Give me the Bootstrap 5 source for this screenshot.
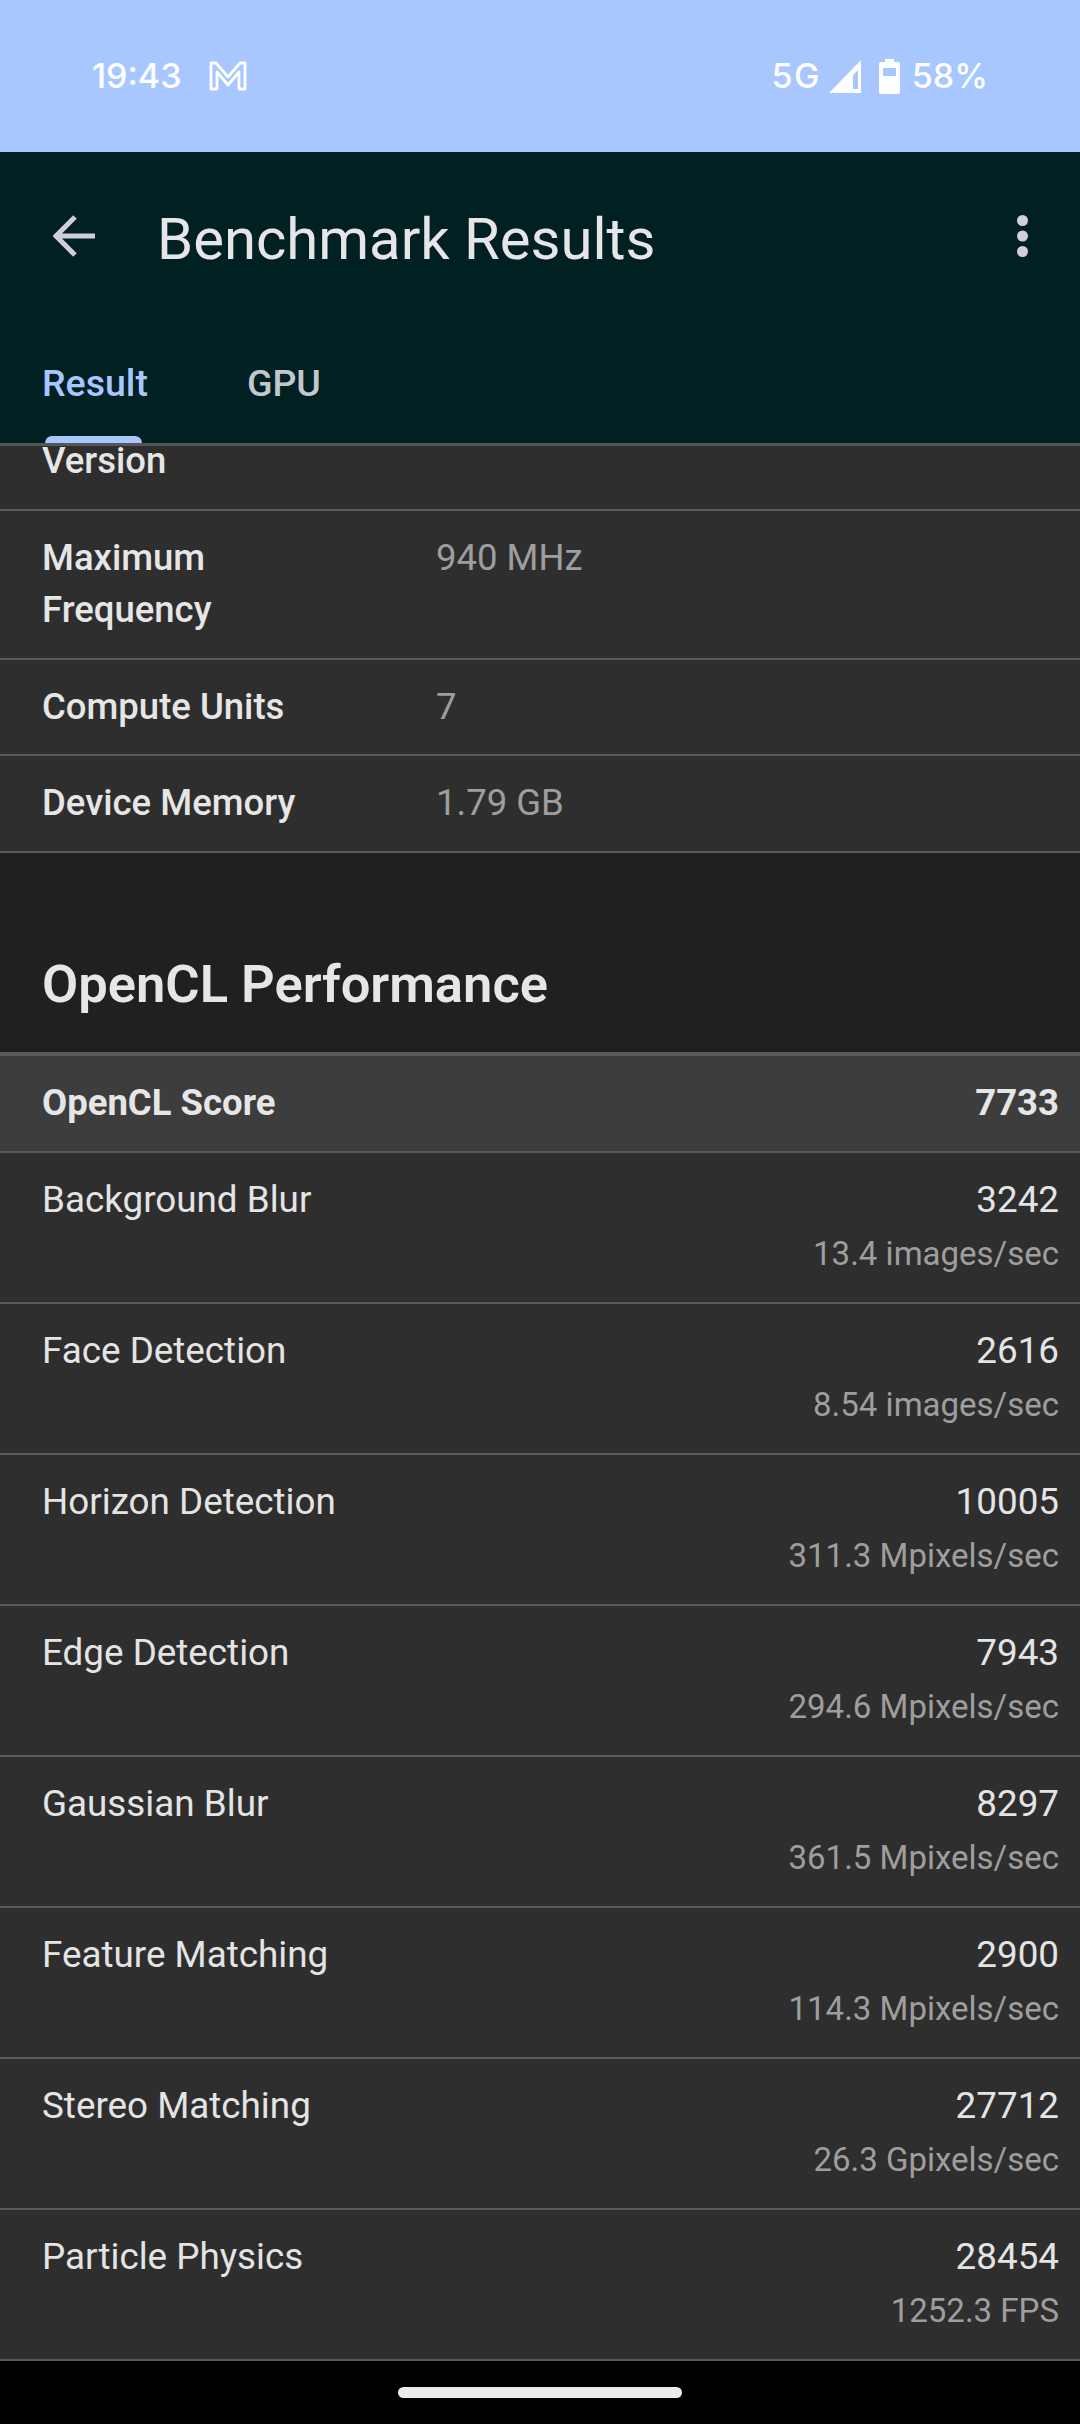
<!DOCTYPE html>
<html lang="en">
<head>
<meta charset="utf-8">
<title>Benchmark Results</title>
<link href="https://cdn.jsdelivr.net/npm/bootstrap@5.3.0/dist/css/bootstrap.min.css" rel="stylesheet">
<style>
html,body{margin:0;background:#000;}
body{width:1080px;height:2424px;overflow:hidden;font-family:Roboto,"Liberation Sans",sans-serif;color:#e6e6e6;}
.sbar{height:152px;background:#a9c7ff;color:#fff;padding:0 92px;font-family:Inter,Roboto,sans-serif;font-size:34px;font-weight:500;line-height:1;}
.netlab{letter-spacing:1.5px;}
.mailicon{margin-left:28px;}
.sigicon{margin-left:8px;}
.baticon{margin-left:18px;}
.pct{margin-left:12px;}
.appbar{height:291px;background:#002022;position:relative;}
.toprow{height:172px;padding-left:53px;padding-right:52px;}
.toprow svg{margin-bottom:5px;}
.ttl{font-size:58px;line-height:1;color:#e6e6e9;margin-left:62px;font-weight:400;padding-top:1px;}
.tabrow{padding-left:42px;margin-top:41px;gap:99px;font-size:37.5px;font-weight:500;line-height:1;}
.tab1{color:#a9c7ff;}
.tab2{color:#c3c8cd;}
.tabmark{position:absolute;left:45px;bottom:0;width:97px;height:7px;background:#a9c7ff;border-radius:7px 7px 0 0;}
.pane{height:1918px;background:#2e2e2e;}
.cutrow{height:68px;border-top:3px solid #555;border-bottom:2px solid #5a5a5a;padding-left:42px;}
.cutrow b{font-size:36.5px;font-weight:500;line-height:1;margin-top:-3px;display:block;color:#e6e6e6;}
.inforow{border-bottom:2px solid #5a5a5a;padding:0 0 0 42px;line-height:52px;font-size:36.5px;}
.h96{height:96px;}
.h97{height:97px;padding-bottom:2px;}
.h149{height:149px;padding-top:21px;}
.ilab{width:394px;font-weight:500;color:#e6e6e6;}
.ival{color:#9e9e9e;font-size:36.5px;}
.darksec{height:199px;background:#1f2022;padding:0 42px 42px;}
.darksec h2{font-size:52.5px;font-weight:600;margin:0;line-height:1;color:#e6e6e6;}
.scorerow{height:101px;background:#3d3d3d;border-top:4px solid #5a5a5a;border-bottom:2px solid #5a5a5a;padding:0 21px 0 42px;font-size:36.5px;font-weight:700;color:#e6e6e6;}
.resrow{height:151px;border-bottom:2px solid #5a5a5a;padding:21px 21px 0 42px;font-size:36.8px;color:#e4e4e4;}
.resrow .rv{line-height:52px;}
.resrow .rs{line-height:52px;margin-top:2px;color:#9e9e9e;font-size:33px;}
.gest{height:63px;background:#000;padding-top:26px;}
.pill{width:284px;height:11px;border-radius:6px;background:#ebebeb;}
</style>
</head>
<body>
<div class="sbar d-flex justify-content-between align-items-center">
  <div class="d-flex align-items-center"><span>19:43</span>
    <svg class="mailicon" width="38" height="30" viewBox="0 0 38 30" fill="none" stroke="#fff" stroke-width="2.8" stroke-linejoin="round"><path d="M2 2h5l12 14L31 2h5v26h-6V11L19 24 8 11v17H2z"/></svg>
  </div>
  <div class="d-flex align-items-center"><span class="netlab">5G</span>
    <svg class="sigicon" width="32" height="33" viewBox="0 0 32 33"><path d="M0 33 32 0v33z" fill="#fff"/><path d="M24 15v14h5V10z" fill="#a9c7ff"/></svg>
    <svg class="baticon" width="21" height="35" viewBox="0 0 21 35"><path d="M6 0h9v3h4a2 2 0 0 1 2 2v28a2 2 0 0 1-2 2H2a2 2 0 0 1-2-2V5a2 2 0 0 1 2-2h4z" fill="#fff"/><rect x="4" y="9" width="13" height="8" fill="#a9c7ff"/></svg>
    <span class="pct">58%</span>
  </div>
</div>
<div class="appbar">
  <div class="toprow d-flex align-items-center">
    <svg width="42" height="42" viewBox="0 0 42 42" fill="none" stroke="#cfcfdc" stroke-width="5"><path d="M42 21H4M22 2 3 21l19 19"/></svg>
    <div class="ttl flex-grow-1">Benchmark Results</div>
    <svg width="11" height="42" viewBox="0 0 11 42" fill="#d0d0da"><circle cx="5.5" cy="5.5" r="5.5"/><circle cx="5.5" cy="21" r="5.5"/><circle cx="5.5" cy="36.5" r="5.5"/></svg>
  </div>
  <div class="tabrow d-flex"><div class="tab1">Result</div><div class="tab2">GPU</div></div>
  <div class="tabmark"></div>
</div>
<div class="pane">
  <div class="cutrow overflow-hidden"><b>Version</b></div>
  <div class="inforow h149 d-flex align-items-start"><div class="ilab">Maximum<br>Frequency</div><div class="ival">940 MHz</div></div>
  <div class="inforow h96 d-flex align-items-center"><div class="ilab">Compute Units</div><div class="ival">7</div></div>
  <div class="inforow h97 d-flex align-items-center"><div class="ilab">Device Memory</div><div class="ival">1.79 GB</div></div>
  <div class="darksec d-flex align-items-end"><h2>OpenCL Performance</h2></div>
  <div class="scorerow d-flex justify-content-between align-items-center"><div>OpenCL Score</div><div>7733</div></div>
  <div class="resrow d-flex justify-content-between"><div class="rv">Background Blur</div><div class="text-end"><div class="rv">3242</div><div class="rs">13.4 images/sec</div></div></div>
  <div class="resrow d-flex justify-content-between"><div class="rv">Face Detection</div><div class="text-end"><div class="rv">2616</div><div class="rs">8.54 images/sec</div></div></div>
  <div class="resrow d-flex justify-content-between"><div class="rv">Horizon Detection</div><div class="text-end"><div class="rv">10005</div><div class="rs">311.3 Mpixels/sec</div></div></div>
  <div class="resrow d-flex justify-content-between"><div class="rv">Edge Detection</div><div class="text-end"><div class="rv">7943</div><div class="rs">294.6 Mpixels/sec</div></div></div>
  <div class="resrow d-flex justify-content-between"><div class="rv">Gaussian Blur</div><div class="text-end"><div class="rv">8297</div><div class="rs">361.5 Mpixels/sec</div></div></div>
  <div class="resrow d-flex justify-content-between"><div class="rv">Feature Matching</div><div class="text-end"><div class="rv">2900</div><div class="rs">114.3 Mpixels/sec</div></div></div>
  <div class="resrow d-flex justify-content-between"><div class="rv">Stereo Matching</div><div class="text-end"><div class="rv">27712</div><div class="rs">26.3 Gpixels/sec</div></div></div>
  <div class="resrow d-flex justify-content-between"><div class="rv">Particle Physics</div><div class="text-end"><div class="rv">28454</div><div class="rs">1252.3 FPS</div></div></div>
</div>
<div class="gest d-flex justify-content-center"><div class="pill"></div></div>
<script src="https://cdn.jsdelivr.net/npm/bootstrap@5.3.0/dist/js/bootstrap.bundle.min.js"></script>
</body>
</html>
